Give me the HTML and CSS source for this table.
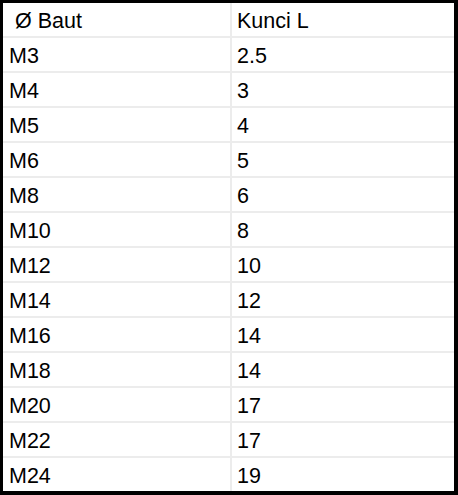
FILE: index.html
```html
<!DOCTYPE html>
<html>
<head>
<meta charset="utf-8">
<link rel="stylesheet" href="styles.css">
</head>
<body>
<div class="frame">
<table class="grid">
<tr><td>&nbsp;Ø Baut</td><td>Kunci L</td></tr>
<tr><td>M3</td><td>2.5</td></tr>
<tr><td>M4</td><td>3</td></tr>
<tr><td>M5</td><td>4</td></tr>
<tr><td>M6</td><td>5</td></tr>
<tr><td>M8</td><td>6</td></tr>
<tr><td>M10</td><td>8</td></tr>
<tr><td>M12</td><td>10</td></tr>
<tr><td>M14</td><td>12</td></tr>
<tr><td>M16</td><td>14</td></tr>
<tr><td>M18</td><td>14</td></tr>
<tr><td>M20</td><td>17</td></tr>
<tr><td>M22</td><td>17</td></tr>
<tr><td>M24</td><td>19</td></tr>
</table>
</div>
</body>
</html>
```
FILE: styles.css
```css
html, body {
  margin: 0;
  padding: 0;
  background: #fff;
}
.frame {
  width: 458px;
  height: 495px;
  box-sizing: border-box;
  border-style: solid;
  border-color: #000;
  border-width: 3px 4px 4px 3px;
  overflow: hidden;
}
.grid {
  width: 100%;
  height: 100%;
  border-collapse: collapse;
  table-layout: fixed;
  font-family: "Liberation Sans", Arial, sans-serif;
  font-size: 21.5px;
  color: #000;
}
.grid td {
  border-bottom: 2px solid #ececec;
  padding: 4px 0 0 6px;
  vertical-align: middle;
  white-space: nowrap;
}
.grid tr:last-child td {
  border-bottom: none;
}
.grid td:first-child {
  width: 221px;
  border-right: 2px solid #ececec;
}
.grid td:last-child {
  padding-left: 5px;
}
```
